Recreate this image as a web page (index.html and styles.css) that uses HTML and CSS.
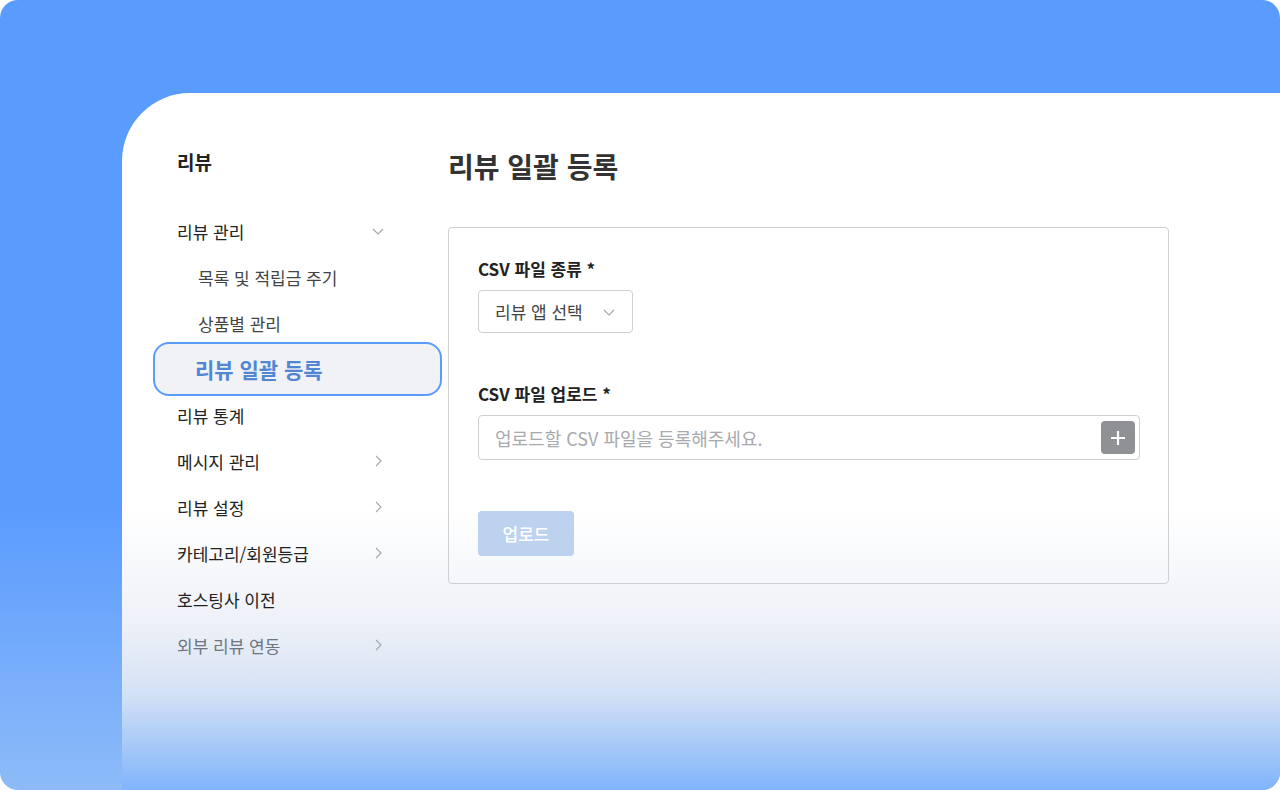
FILE: index.html
```html
<!DOCTYPE html>
<html lang="ko">
<head>
  <meta charset="UTF-8">
  <title>리뷰 일괄 등록</title>
  <link rel="stylesheet" href="styles.css">
</head>
<body>

  <div class="frame">
    <div class="panel">

      <aside class="sidebar">
        <div class="sidebar-title">리뷰</div>
        <ul class="menu">
          <li class="menu-item">
            <span>리뷰 관리</span>
            <svg class="chev" width="12" height="12" viewBox="0 0 12 12"><path d="M1 4 L6 9 L11 4" /></svg>
          </li>
          <li class="menu-item sub">목록 및 적립금 주기</li>
          <li class="menu-item sub">상품별 관리</li>
          <li class="menu-item active">리뷰 일괄 등록</li>
          <li class="menu-item">리뷰 통계</li>
          <li class="menu-item">
            <span>메시지 관리</span>
            <svg class="chev" width="12" height="12" viewBox="0 0 12 12"><path d="M4 1 L9 6 L4 11" /></svg>
          </li>
          <li class="menu-item">
            <span>리뷰 설정</span>
            <svg class="chev" width="12" height="12" viewBox="0 0 12 12"><path d="M4 1 L9 6 L4 11" /></svg>
          </li>
          <li class="menu-item">
            <span>카테고리/회원등급</span>
            <svg class="chev" width="12" height="12" viewBox="0 0 12 12"><path d="M4 1 L9 6 L4 11" /></svg>
          </li>
          <li class="menu-item">호스팅사 이전</li>
          <li class="menu-item muted">
            <span>외부 리뷰 연동</span>
            <svg class="chev" width="12" height="12" viewBox="0 0 12 12"><path d="M4 1 L9 6 L4 11" /></svg>
          </li>
        </ul>
      </aside>

      <main class="content">
        <h1 class="page-title">리뷰 일괄 등록</h1>

        <div class="card">
          <div class="field-label">CSV 파일 종류 *</div>
          <div class="select">
            <span>리뷰 앱 선택</span>
            <svg class="chev" width="12" height="12" viewBox="0 0 12 12"><path d="M1 4 L6 9 L11 4" /></svg>
          </div>

          <div class="field-label upload-label">CSV 파일 업로드 *</div>
          <div class="file-input">
            <span class="placeholder">업로드할 CSV 파일을 등록해주세요.</span>
            <div class="add-btn">
              <svg width="18" height="18" viewBox="0 0 18 18"><path d="M9 2 V16 M2 9 H16" /></svg>
            </div>
          </div>

          <button class="upload-btn">업로드</button>
        </div>
      </main>

    </div>
  </div>

</body>
</html>
```

FILE: styles.css
```css
* {
  box-sizing: border-box;
}

body {
  margin: 0;
  background: #fff;
  font-family: "Noto Sans CJK KR", "Noto Sans", sans-serif;
  color: #222;
}

.frame {
  position: relative;
  width: 1280px;
  height: 790px;
  padding: 93px 0 0 122px;
  border-radius: 18px;
  overflow: hidden;
  background: linear-gradient(to bottom, #5a9bfe 0%, #5a9bfe 64%, #8dbbf8 100%);
}

.panel {
  display: flex;
  height: 100%;
  border-top-left-radius: 68px;
  background: linear-gradient(to bottom, #fff 0%, #fff 60%, #eef1f7 76%, #d5e2f5 86%, #80b4fb 100%);
}

/* sidebar */
.sidebar {
  width: 326px;
  padding: 56px 0 0 55px;
}

.sidebar-title {
  font-size: 19px;
  font-weight: 700;
  line-height: 26px;
  color: #222;
  margin-bottom: 33px;
}

.menu {
  list-style: none;
  margin: 0;
  padding: 0;
  width: 208px;
}

.menu-item {
  display: flex;
  align-items: center;
  justify-content: space-between;
  height: 46px;
  font-size: 17px;
  color: #222;
}

.menu-item.sub {
  padding-left: 21px;
  color: #444;
}

.menu-item.muted {
  color: #6f7580;
}

.menu-item.active {
  height: 54px;
  margin: -4px 0 -4px -24px;
  width: 289px;
  padding-left: 40px;
  border: 2.5px solid #5a9bfe;
  border-radius: 16px;
  background: #f0f2f6;
  color: #5086d4;
  font-size: 21px;
  font-weight: 700;
}

.chev {
  fill: none;
  stroke: #a3a6ab;
  stroke-width: 1.1;
  margin-right: 1px;
}

/* main content */
.content {
  flex: 1;
  padding-top: 51px;
}

.page-title {
  margin: 0 0 39px;
  font-size: 28px;
  font-weight: 700;
  line-height: 44px;
  color: #333;
}

.card {
  width: 721px;
  height: 357px;
  padding: 29px 28px 0 29px;
  border: 1px solid #cfd0d3;
  border-radius: 4px;
}

.field-label {
  font-size: 17px;
  font-weight: 700;
  line-height: 24px;
  color: #222;
  margin-bottom: 9px;
}

.upload-label {
  margin-top: 49px;
  margin-bottom: 9px;
}

.select {
  display: flex;
  align-items: center;
  justify-content: space-between;
  width: 155px;
  height: 43px;
  padding: 0 16px 0 16px;
  border: 1px solid #cdcfd3;
  border-radius: 4px;
  background: #fff;
  font-size: 17px;
  color: #444;
}

.file-input {
  display: flex;
  align-items: center;
  justify-content: space-between;
  height: 45px;
  padding: 0 4px 0 16px;
  border: 1px solid #cdcfd3;
  border-radius: 4px;
  background: #fff;
}

.placeholder {
  font-size: 18px;
  color: #a8a9ac;
}

.add-btn {
  display: flex;
  align-items: center;
  justify-content: center;
  width: 34px;
  height: 33px;
  border-radius: 4px;
  background: #8f9195;
}

.add-btn svg {
  stroke: #fff;
  stroke-width: 2.2;
}

.upload-btn {
  margin-top: 51px;
  width: 96px;
  height: 45px;
  border: none;
  border-radius: 4px;
  background: #bcd2ee;
  color: #fff;
  font-family: inherit;
  font-size: 17px;
  font-weight: 500;
}
```
